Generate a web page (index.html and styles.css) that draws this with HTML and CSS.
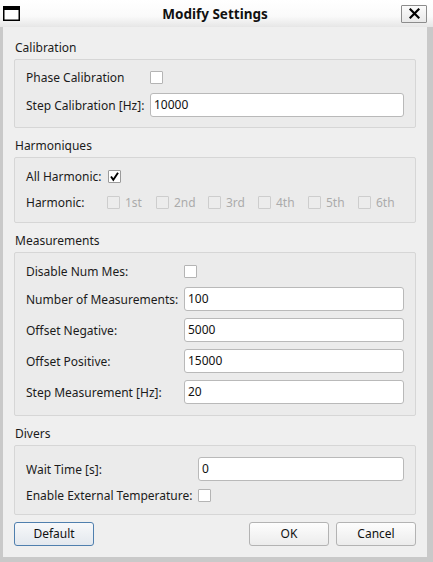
FILE: index.html
```html
<!DOCTYPE html>
<html>
<head>
<meta charset="utf-8">
<link rel="stylesheet" href="styles.css">
</head>
<body>
<div class="window">
  <div class="titlebar">
    <svg class="win-icon" width="17" height="15" viewBox="0 0 17 15"><rect x="0.75" y="0.75" width="15.5" height="13.5" fill="#fff" stroke="#000" stroke-width="1.5"/><rect x="0" y="0" width="17" height="4" fill="#000"/></svg>
    <div class="title">Modify Settings</div>
    <div class="close-btn"><svg width="11" height="11" viewBox="0 0 11 11"><path d="M1.5 1.5 L9.5 9.5 M9.5 1.5 L1.5 9.5" stroke="#000" stroke-width="2.2" stroke-linecap="square"/></svg></div>
  </div>
  <div class="frame">
    <div class="dialog">
      <section class="group">
        <div class="group-title">Calibration</div>
        <div class="group-box cal">
          <div class="row check-row"><span class="lbl">Phase Calibration</span><span class="cb"></span></div>
          <div class="row"><span class="lbl">Step Calibration [Hz]:</span><div class="input">10000</div></div>
        </div>
      </section>
      <section class="group">
        <div class="group-title">Harmoniques</div>
        <div class="group-box harm">
          <div class="row check-row"><span class="lbl">All Harmonic:</span><span class="cb checked"><svg width="11" height="11" viewBox="0 0 11 11"><path d="M2 5.5 L4.3 8.8 L9 1.8" fill="none" stroke="#000" stroke-width="1.9"/></svg></span></div>
          <div class="row check-row"><span class="lbl">Harmonic:</span>
            <div class="harm-list">
              <span class="hitem"><span class="cb disabled"></span><span class="dis">1st</span></span>
              <span class="hitem wide"><span class="cb disabled"></span><span class="dis">2nd</span></span>
              <span class="hitem"><span class="cb disabled"></span><span class="dis">3rd</span></span>
              <span class="hitem"><span class="cb disabled"></span><span class="dis">4th</span></span>
              <span class="hitem"><span class="cb disabled"></span><span class="dis">5th</span></span>
              <span class="hitem"><span class="cb disabled"></span><span class="dis">6th</span></span>
            </div>
          </div>
        </div>
      </section>
      <section class="group">
        <div class="group-title">Measurements</div>
        <div class="group-box meas">
          <div class="row check-row"><span class="lbl">Disable Num Mes:</span><span class="cb"></span></div>
          <div class="row"><span class="lbl">Number of Measurements:</span><div class="input">100</div></div>
          <div class="row"><span class="lbl">Offset Negative:</span><div class="input">5000</div></div>
          <div class="row"><span class="lbl">Offset Positive:</span><div class="input">15000</div></div>
          <div class="row"><span class="lbl">Step Measurement [Hz]:</span><div class="input">20</div></div>
        </div>
      </section>
      <section class="group">
        <div class="group-title">Divers</div>
        <div class="group-box div">
          <div class="row"><span class="lbl">Wait Time [s]:</span><div class="input">0</div></div>
          <div class="row check-row"><span class="lbl">Enable External Temperature:</span><span class="cb"></span></div>
        </div>
      </section>
      <div class="buttons">
        <div class="btn default">Default</div>
        <div class="spacer"></div>
        <div class="btn">OK</div>
        <div class="btn">Cancel</div>
      </div>
    </div>
  </div>
</div>
</body>
</html>
```

FILE: styles.css
```css
* { box-sizing: border-box; }
html, body { margin: 0; padding: 0; }
body {
  width: 433px;
  height: 562px;
  overflow: hidden;
  background: #c9c9c9;
  font-family: "Noto Sans", "Open Sans", sans-serif;
  font-size: 12px;
  color: #1b1b1b;
}
.window { width: 433px; height: 562px; display: flex; flex-direction: column; }
.titlebar {
  height: 27px;
  flex: none;
  display: flex;
  align-items: center;
  position: relative;
  background: linear-gradient(#ffffff, #fafafa 60%, #e6e6e6);
}
.win-icon { margin-left: 3px; }
.title {
  flex: 1;
  text-align: center;
  font-weight: bold;
  font-size: 13.5px;
  color: #111;
  margin-left: 9px;
}
.close-btn {
  width: 26px;
  height: 18px;
  margin-right: 6px;
  border: 1px solid #8c8c8c;
  border-radius: 1px;
  background: linear-gradient(#fbfbfb, #e9e9e9);
  display: flex;
  align-items: center;
  justify-content: center;
}
.frame {
  flex: 1;
  padding: 0 6px 5px 3px;
  display: flex;
  min-width: 0;
}
.dialog {
  flex: 1;
  min-width: 0;
  background: #efefef;
  padding: 12px 11px 0 11px;
  display: flex;
  flex-direction: column;
}
.group { margin-bottom: 9px; }
.group-title { height: 17px; line-height: 17px; margin-bottom: 3px; padding-left: 1px; }
.group-box {
  background: #ebebeb;
  border: 1px solid #d6d6d6;
  border-radius: 2px;
  padding: 10px 11px 10px 11px;
  display: flex;
  flex-direction: column;
}
.row { display: flex; align-items: center; height: 24px; min-width: 0; }
.check-row { height: 16px; }
.lbl { flex: none; white-space: nowrap; }
.cal .lbl { width: 124px; }
.harm .lbl { width: 82px; }
.meas .lbl { width: 158px; }
.div .lbl { width: 172px; }

.cal { padding-top: 9px; padding-bottom: 10px; }
.cal .row + .row { margin-top: 8px; }
.harm { padding-top: 10px; padding-bottom: 12px; }
.harm .row + .row { margin-top: 10px; }
.meas { padding-top: 10px; padding-bottom: 11px; }
.meas .row + .row { margin-top: 7px; }
.meas .check-row + .row { margin-top: 8px; }
.div { padding-top: 11px; padding-bottom: 11px; }
.div .row + .row { margin-top: 6px; }

.input {
  flex: 1;
  min-width: 0;
  height: 24px;
  background: #fff;
  border: 1px solid #b9b9b9;
  border-radius: 3px;
  padding-left: 3px;
  line-height: 22px;
  color: #111;
}
.cb {
  width: 13px;
  height: 13px;
  flex: none;
  background: #fff;
  border: 1px solid #b4b4b4;
  border-radius: 1px;
  display: flex;
  align-items: center;
  justify-content: center;
}
.cb.checked { border-color: #9a9a9a; }
.cb.disabled { background: #ececec; border-color: #cdcdcd; }
.harm-list { display: flex; margin-left: -1px; }
.hitem { display: flex; align-items: center; gap: 5px; width: 50px; flex: none; }
.hitem:first-child { width: 49px; }
.hitem.wide { width: 52px; }
.hitem:last-child { width: auto; }
.dis { color: #ababab; }

.buttons { display: flex; gap: 7px; margin-top: -2px; }
.spacer { flex: 1; }
.btn {
  width: 80px;
  height: 24px;
  border: 1px solid #b3b3b3;
  border-radius: 3px;
  background: linear-gradient(#fdfdfd, #ececec);
  text-align: center;
  line-height: 22px;
  color: #111;
}
.btn.default {
  border-color: #4f7fae;
  background: linear-gradient(#f7f8fa, #e3e8ee);
}
```
